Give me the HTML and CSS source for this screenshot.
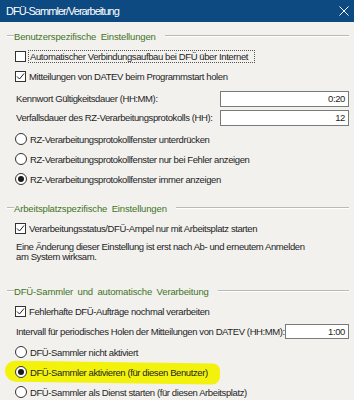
FILE: index.html
```html
<!DOCTYPE html>
<html lang="de">
<head>
<meta charset="utf-8">
<title>DFÜ-Sammler/Verarbeitung</title>
<link rel="stylesheet" href="styles.css">
</head>
<body>
<div class="dialog">
  <div class="titlebar">
    <span class="title">DFÜ-Sammler/Verarbeitung</span>
    <svg class="close" width="10" height="10" viewBox="0 0 10 10"><path d="M0.5 0.5 L9.5 9.5 M9.5 0.5 L0.5 9.5" stroke="#fff" stroke-width="1"/></svg>
  </div>
  <div class="content">
    <div class="group-head g1"><span class="line-l"></span><span class="gtext">Benutzerspezifische Einstellungen</span><span class="line-r"></span></div>
    <div class="row"><span class="cb"></span><span class="lbl focus">Automatischer Verbindungsaufbau bei DFÜ über Internet</span></div>
    <div class="row"><span class="cb checked"><svg width="9" height="9" viewBox="0 0 9 9"><path d="M1 4.5 L3.5 7 L8 1.5" fill="none" stroke="#222" stroke-width="1"/></svg></span><span class="lbl">Mitteilungen von DATEV beim Programmstart holen</span></div>
    <div class="field-row first"><span class="flbl">Kennwort Gültigkeitsdauer (HH:MM):</span><span class="input wide">0:20</span></div>
    <div class="field-row"><span class="flbl">Verfallsdauer des RZ-Verarbeitungsprotokolls (HH):</span><span class="input wide">12</span></div>
    <div class="row radios-first"><span class="rb"></span><span class="lbl">RZ-Verarbeitungsprotokollfenster unterdrücken</span></div>
    <div class="row"><span class="rb"></span><span class="lbl">RZ-Verarbeitungsprotokollfenster nur bei Fehler anzeigen</span></div>
    <div class="row"><span class="rb on"></span><span class="lbl">RZ-Verarbeitungsprotokollfenster immer anzeigen</span></div>

    <div class="group-head g2"><span class="line-l"></span><span class="gtext">Arbeitsplatzspezifische Einstellungen</span><span class="line-r"></span></div>
    <div class="row"><span class="cb checked"><svg width="9" height="9" viewBox="0 0 9 9"><path d="M1 4.5 L3.5 7 L8 1.5" fill="none" stroke="#222" stroke-width="1"/></svg></span><span class="lbl">Verarbeitungsstatus/DFÜ-Ampel nur mit Arbeitsplatz starten</span></div>
    <p class="note">Eine Änderung dieser Einstellung ist erst nach Ab- und erneutem Anmelden<br>am System wirksam.</p>

    <div class="group-head g3"><span class="line-l"></span><span class="gtext">DFÜ-Sammler und automatische Verarbeitung</span><span class="line-r"></span></div>
    <div class="row"><span class="cb checked"><svg width="9" height="9" viewBox="0 0 9 9"><path d="M1 4.5 L3.5 7 L8 1.5" fill="none" stroke="#222" stroke-width="1"/></svg></span><span class="lbl">Fehlerhafte DFÜ-Aufträge nochmal verarbeiten</span></div>
    <div class="field-row interval"><span class="flbl">Intervall für periodisches Holen der Mitteilungen von DATEV (HH:MM):</span><span class="input narrow">1:00</span></div>
    <div class="row"><span class="rb"></span><span class="lbl">DFÜ-Sammler nicht aktiviert</span></div>
    <div class="row marked"><span class="rb on"></span><span class="lbl">DFÜ-Sammler aktivieren (für diesen Benutzer)</span></div>
    <div class="row"><span class="rb"></span><span class="lbl">DFÜ-Sammler als Dienst starten (für diesen Arbeitsplatz)</span></div>
  </div>
</div>
</body>
</html>
```
FILE: styles.css
```css
* { box-sizing: border-box; }
html, body { margin: 0; padding: 0; }
body {
  width: 354px;
  height: 400px;
  overflow: hidden;
  background: #f2f1ee;
  font-family: "Liberation Sans", Arial, sans-serif;
  font-size: 9.5px;
  letter-spacing: -0.4px;
  color: #1e1e1e;
}
.dialog { width: 354px; }
.titlebar {
  height: 22px;
  background: #0d4a82;
  color: #fff;
  display: flex;
  align-items: center;
  justify-content: space-between;
  padding: 0 5px 0 6px;
}
.title { font-size: 11px; letter-spacing: -0.95px; }
.content { padding: 4px 5px 0 7px; }

.group-head {
  height: 20px;
  display: flex;
  align-items: center;
  color: #3f7324;
}
.line-l { width: 7px; height: 1px; background: #b9b9b9; border-bottom: 1px solid #fff; box-sizing: content-box; }
.gtext { padding: 0 9px 0 0; word-spacing: 2px; letter-spacing: -0.15px; }
.line-r { flex: 1; height: 1px; background: #b9b9b9; border-bottom: 1px solid #fff; box-sizing: content-box; }
.g2 { margin-top: 9px; }
.g3 { margin-top: 19px; }

.row {
  height: 20px;
  display: flex;
  align-items: center;
  padding-left: 8px;
  position: relative;
}
.cb {
  width: 11px; height: 11px;
  background: #fff;
  border: 1px solid #333;
  display: flex; align-items: center; justify-content: center;
  flex: none;
}
.rb {
  width: 12px; height: 12px;
  border-radius: 50%;
  background: #fff;
  border: 1px solid #333;
  flex: none;
  display: flex; align-items: center; justify-content: center;
}
.rb.on::after {
  content: "";
  width: 6px; height: 6px;
  border-radius: 50%;
  background: #1a1a1a;
}
.lbl { margin-left: 2px; padding: 1px 1px; white-space: nowrap; }
.focus { border: 1px dotted #555; padding: 0 6px 0 1px; }

.field-row {
  height: 19px;
  display: flex;
  align-items: center;
  justify-content: space-between;
  padding-left: 9px;
}
.field-row.first { margin-top: 3px; }
.radios-first { margin-top: 2px; }
.flbl { white-space: nowrap; }
.input {
  background: #fff;
  border: 1px solid #7a7a7a;
  height: 16px;
  text-align: right;
  padding: 0 3px;
  line-height: 14px;
  flex: none;
}
.wide { width: 129px; }
.narrow { width: 64px; height: 15px; line-height: 13px; }
.field-row.interval { height: 20px; margin-bottom: 1px; }

.note {
  margin: 4px 0 0 9px;
  line-height: 10px;
}

.marked::before {
  content: "";
  position: absolute;
  left: -2px; top: 0px;
  width: 215px; height: 21px;
  background: #f2f20c;
  border-radius: 11px 8px 8px 12px;
  transform: rotate(0.8deg);
  z-index: -1;
}
.marked { z-index: 0; }
```
